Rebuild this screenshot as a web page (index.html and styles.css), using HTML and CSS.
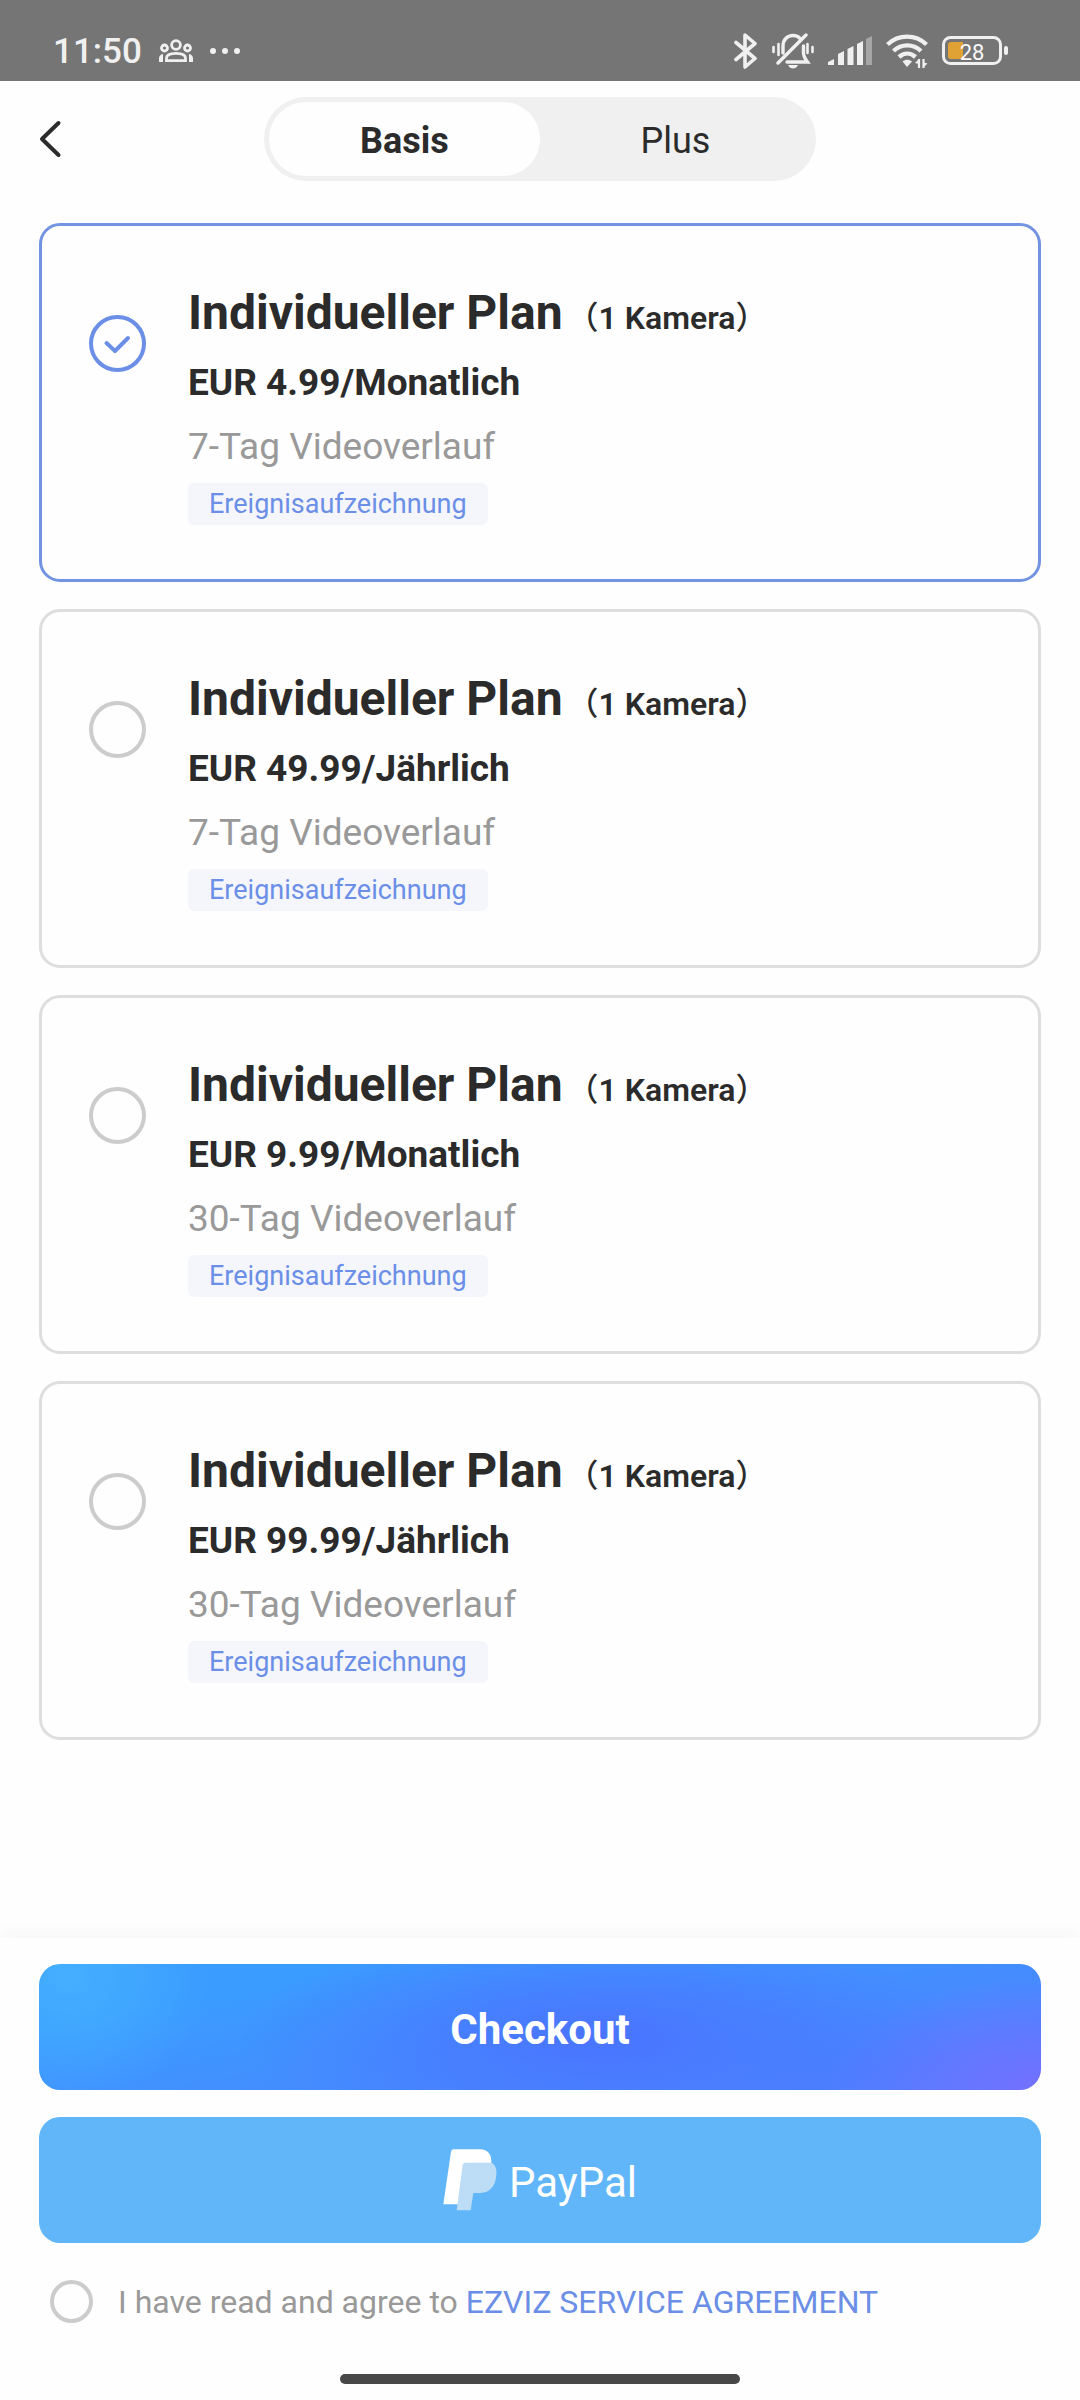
FILE: index.html
```html
<!DOCTYPE html>
<html lang="de">
<head>
    <meta charset="UTF-8">
    <meta name="viewport" content="width=device-width, initial-scale=1">
    <title>Individueller Plan</title>
    <link rel="stylesheet" href="styles.css">
</head>
<body>
    <div class="status-bar">
        <div class="status-left">
            <span class="time">11:50</span>
            <svg width="34" height="24" viewBox="0 0 34 24" fill="none" stroke="#f0f0f0" stroke-width="2.8">
                <circle cx="17" cy="6" r="4.4"/>
                <circle cx="5.5" cy="9" r="3"/>
                <circle cx="28.5" cy="9" r="3"/>
                <path d="M7.5 21.600v-2.300c0-3.500 4-5 9.500-5s9.500 1.500 9.500 5v2.300z"/>
                <path d="M0 23v-3.500c0-2.500 1.500-4 4-4.500v8zM34 23v-3.500c0-2.500-1.500-4-4-4.500v8z" fill="#f0f0f0" stroke="none"/>
            </svg>
            <svg width="30" height="6" viewBox="0 0 30 6" fill="#f0f0f0">
                <circle cx="3" cy="3" r="3"/>
                <circle cx="15" cy="3" r="3"/>
                <circle cx="27" cy="3" r="3"/>
            </svg>
        </div>
        <div class="status-right">
            <svg width="24" height="36" viewBox="0 0 24 36" fill="none" stroke="#f0f0f0" stroke-width="3.600" stroke-linejoin="round" stroke-linecap="round">
                <path d="M2 9.500l19 16L11 34V2l10 8.500-19 16"/>
            </svg>
            <svg width="42" height="36" viewBox="0 0 42 36" fill="none" stroke="#f0f0f0" stroke-width="3.400" stroke-linecap="round">
                <path d="M11 20v-7c0-6 4-10.500 10-10.500 3 0 5.500 1 7 3M31.500 13v7c0 3 1 5 4 9H15"/>
                <path d="M34 2L6 30"/>
                <path d="M1.500 14v5M6.500 11v11M35.500 11v9M40.500 14v5" stroke-width="2.600"/>
                <path d="M16 32h10c-1 2.500-3 3.500-5 3.500s-4-1-5-3.500z" fill="#f0f0f0" stroke="none"/>
            </svg>
            <svg width="44" height="30" viewBox="0 0 44 30" fill="#f0f0f0">
                <path d="M0 29v-3l6-3v6zM10 29V18l6-3v14zM19.500 29V13l6-3v19zM29 29V8l6-3v24z"/>
                <path d="M38 29V3l6-3v29z" opacity=".4"/>
            </svg>
            <svg width="42" height="34" viewBox="0 0 42 34" fill="none" stroke="#f0f0f0" stroke-width="4.400">
                <path d="M1.500 10.500c11-10.500 28-10.500 39 0M7.500 17c8-7.500 19.500-7.500 27.500 0M13 23c5-4.500 11.500-4.500 16.500 0"/>
                <path d="M16.500 27.500c3-2.500 6.500-2.500 9.500 0L21 33z" fill="#f0f0f0" stroke="none"/>
                <path d="M33 25v9M37.500 34v-9" stroke-width="2.200"/>
                <path d="M29 29l4-4v5zM41.500 29.500l-4 4v-5z" fill="#f0f0f0" stroke="none"/>
            </svg>
            <svg width="66" height="30" viewBox="0 0 66 30">
                <rect x="1.500" y="1.500" width="57" height="26" rx="7" fill="none" stroke="#f0f0f0" stroke-width="3"/>
                <rect x="62" y="10" width="4" height="9" rx="2" fill="#f0f0f0"/>
                <path d="M9 6h12v17H9a3 3 0 0 1-3-3V9a3 3 0 0 1 3-3z" fill="#e0a235"/>
                <text class="battery-text" x="30" y="24" text-anchor="middle">28</text>
            </svg>
        </div>
    </div>

    <header class="header">
        <button class="back" aria-label="Zurück">
            <svg width="24" height="38" viewBox="0 0 24 38" fill="none" stroke="#2b2b2b" stroke-width="4" stroke-linecap="round" stroke-linejoin="round">
                <path d="M19.500 3L3 19l16.500 16"/>
            </svg>
        </button>
        <div class="tabs" role="tablist">
            <button class="tab active" role="tab" aria-selected="true">Basis</button>
            <button class="tab" role="tab" aria-selected="false">Plus</button>
        </div>
    </header>

    <main class="plans">
        <label class="plan">
            <input class="round" type="radio" name="plan" checked>
            <span class="plan-info">
                <span class="plan-title">Individueller Plan<small><i>（</i>1 Kamera<i>）</i></small></span>
                <span class="plan-price">EUR 4.99/Monatlich</span>
                <span class="plan-desc">7-Tag Videoverlauf</span>
                <span class="plan-tag">Ereignisaufzeichnung</span>
            </span>
        </label>
        <label class="plan">
            <input class="round" type="radio" name="plan">
            <span class="plan-info">
                <span class="plan-title">Individueller Plan<small><i>（</i>1 Kamera<i>）</i></small></span>
                <span class="plan-price">EUR 49.99/Jährlich</span>
                <span class="plan-desc">7-Tag Videoverlauf</span>
                <span class="plan-tag">Ereignisaufzeichnung</span>
            </span>
        </label>
        <label class="plan">
            <input class="round" type="radio" name="plan">
            <span class="plan-info">
                <span class="plan-title">Individueller Plan<small><i>（</i>1 Kamera<i>）</i></small></span>
                <span class="plan-price">EUR 9.99/Monatlich</span>
                <span class="plan-desc">30-Tag Videoverlauf</span>
                <span class="plan-tag">Ereignisaufzeichnung</span>
            </span>
        </label>
        <label class="plan">
            <input class="round" type="radio" name="plan">
            <span class="plan-info">
                <span class="plan-title">Individueller Plan<small><i>（</i>1 Kamera<i>）</i></small></span>
                <span class="plan-price">EUR 99.99/Jährlich</span>
                <span class="plan-desc">30-Tag Videoverlauf</span>
                <span class="plan-tag">Ereignisaufzeichnung</span>
            </span>
        </label>
    </main>

    <footer class="footer">
        <button class="pay checkout">Checkout</button>
        <button class="pay paypal">
            <svg width="54" height="62" viewBox="64 56 162 186">
                <path d="M96 57h79c24 0 36 16 34 43l-60 60-38 62H65L88 64q1-7 8-7z" fill="#fff"/>
                <path d="M131 97h79c12 8 16 20 14 38-3 34-20 53-48 53h-21l-8 52h-42l18-136q1-7 8-7z" fill="#bddcf6"/>
            </svg>
            <span>PayPal</span>
        </button>
        <div class="agree">
            <input class="round small" type="checkbox" id="agree">
            <span><label for="agree">I have read and agree to</label> <a href="#">EZVIZ SERVICE AGREEMENT</a></span>
        </div>
        <div class="home-bar"></div>
    </footer>
</body>
</html>
```
FILE: styles.css
```css
:root {
    --blue: #6b8fe6;
    --text: #2b2b2b;
    --gray: #999;
}

* {
    box-sizing: border-box;
}

body {
    margin: 0;
    min-height: 100vh;
    display: flex;
    flex-direction: column;
    background: #fefefe;
    color: var(--text);
    font-family: Roboto, "Noto Sans CJK SC", sans-serif;
}

button {
    border: none;
    padding: 0;
    background: none;
    font-family: inherit;
    color: inherit;
    cursor: pointer;
}

svg {
    display: block;
    flex: none;
}

/* status bar */
.status-bar {
    height: 81px;
    padding: 21px 72px 0 53px;
    display: flex;
    justify-content: space-between;
    align-items: center;
    background: #757575;
    color: #f0f0f0;
}

.status-left {
    display: flex;
    align-items: center;
    gap: 17px;
}

.status-right {
    display: flex;
    align-items: center;
    gap: 14px;
}

.time {
    padding-top: 2px;
    font-size: 35px;
    font-weight: 500;
    line-height: 40px;
}

.battery-text {
    font-size: 22px;
    fill: #f8f8f8;
}

/* header */
.header {
    display: grid;
    grid-template-columns: 1fr auto 1fr;
    align-items: center;
    padding: 16px 39px 42px;
}

.back {
    justify-self: start;
}

.tabs {
    display: flex;
    padding: 5px;
    border-radius: 42px;
    background: #f0f0f0;
}

.tab {
    width: 271px;
    height: 74px;
    padding-top: 3px;
    border-radius: 37px;
    font-size: 36px;
}

.tab.active {
    background: #fefefe;
    font-weight: 700;
}

/* plans */
.plans {
    flex: 1;
    display: flex;
    flex-direction: column;
    gap: 27px;
    padding: 0 39px;
}

.plan {
    display: flex;
    align-items: flex-start;
    gap: 42px;
    padding: 57px 47px 54px;
    border: 3px solid #dedede;
    border-radius: 21px;
    cursor: pointer;
}

.plan:has(input:checked) {
    border-color: #7394e0;
}

.plan > .round {
    margin-top: 32px;
}

.plan-info {
    display: flex;
    flex-direction: column;
    align-items: flex-start;
}

.plan-title {
    font-size: 48px;
    font-weight: 700;
    line-height: 60px;
}

.plan-title small {
    margin-left: 4px;
    font-size: 32px;
    font-weight: 600;
    line-height: 32px;
}

.plan-title i {
    font-style: normal;
    font-weight: 500;
}

.plan-price,
.plan-desc {
    margin-top: 16px;
    font-size: 37px;
    line-height: 48px;
}

.plan-price {
    font-weight: 700;
}

.plan-desc {
    color: var(--gray);
}

.plan-tag {
    margin-top: 12px;
    padding: 0 21px;
    border-radius: 6px;
    background: #f4f6fc;
    color: var(--blue);
    font-size: 27px;
    line-height: 42px;
}

/* radio / checkbox */
.round {
    appearance: none;
    flex: none;
    width: 57px;
    height: 57px;
    margin: 0;
    border: 4px solid #ccc;
    border-radius: 50%;
    cursor: pointer;
}

.round.small {
    width: 43px;
    height: 43px;
}

.round:checked {
    border-color: var(--blue);
    background: url("data:image/svg+xml,%3Csvg xmlns='http://www.w3.org/2000/svg' viewBox='0 0 57 57' fill='none' stroke='%236b8fe6' stroke-width='4' stroke-linecap='round' stroke-linejoin='round'%3E%3Cpath d='M17.500 28l8.500 8L39 23'/%3E%3C/svg%3E") center / 57px no-repeat border-box;
}

/* footer */
.footer {
    display: flex;
    flex-direction: column;
    padding: 26px 39px 16px;
    background: #fefefe;
    box-shadow: 0 -4px 20px rgba(0, 0, 0, 0.04);
}

.pay {
    display: flex;
    align-items: center;
    justify-content: center;
    gap: 12px;
    height: 126px;
    margin-bottom: 27px;
    border-radius: 21px;
    color: #fff;
    font-size: 42px;
}

.pay span {
    padding-top: 4px;
}

.checkout {
    padding-top: 4px;
    background:
        radial-gradient(ellipse 36% 90% at 56% 58%, #4a74ff, rgba(74, 116, 255, 0)),
        radial-gradient(ellipse 22% 90% at 100% 100%, #7470ff, rgba(116, 112, 255, 0)),
        radial-gradient(ellipse 14% 100% at 3% 10%, #45afff, rgba(69, 175, 255, 0)),
        linear-gradient(170deg, #3a9cff 20%, #4b82ff 85%);
    font-weight: 700;
}

.paypal {
    background: #60b6f8;
}

.agree {
    display: flex;
    align-items: center;
    gap: 25px;
    margin-top: 9px;
    padding-left: 11px;
    color: var(--gray);
    font-size: 32px;
    line-height: 43px;
}

.agree span {
    padding-top: 2px;
}

.agree a {
    color: var(--blue);
    text-decoration: none;
}

.home-bar {
    align-self: center;
    width: 400px;
    max-width: 60%;
    height: 10px;
    margin-top: 50px;
    border-radius: 5px;
    background: #484848;
}
```
